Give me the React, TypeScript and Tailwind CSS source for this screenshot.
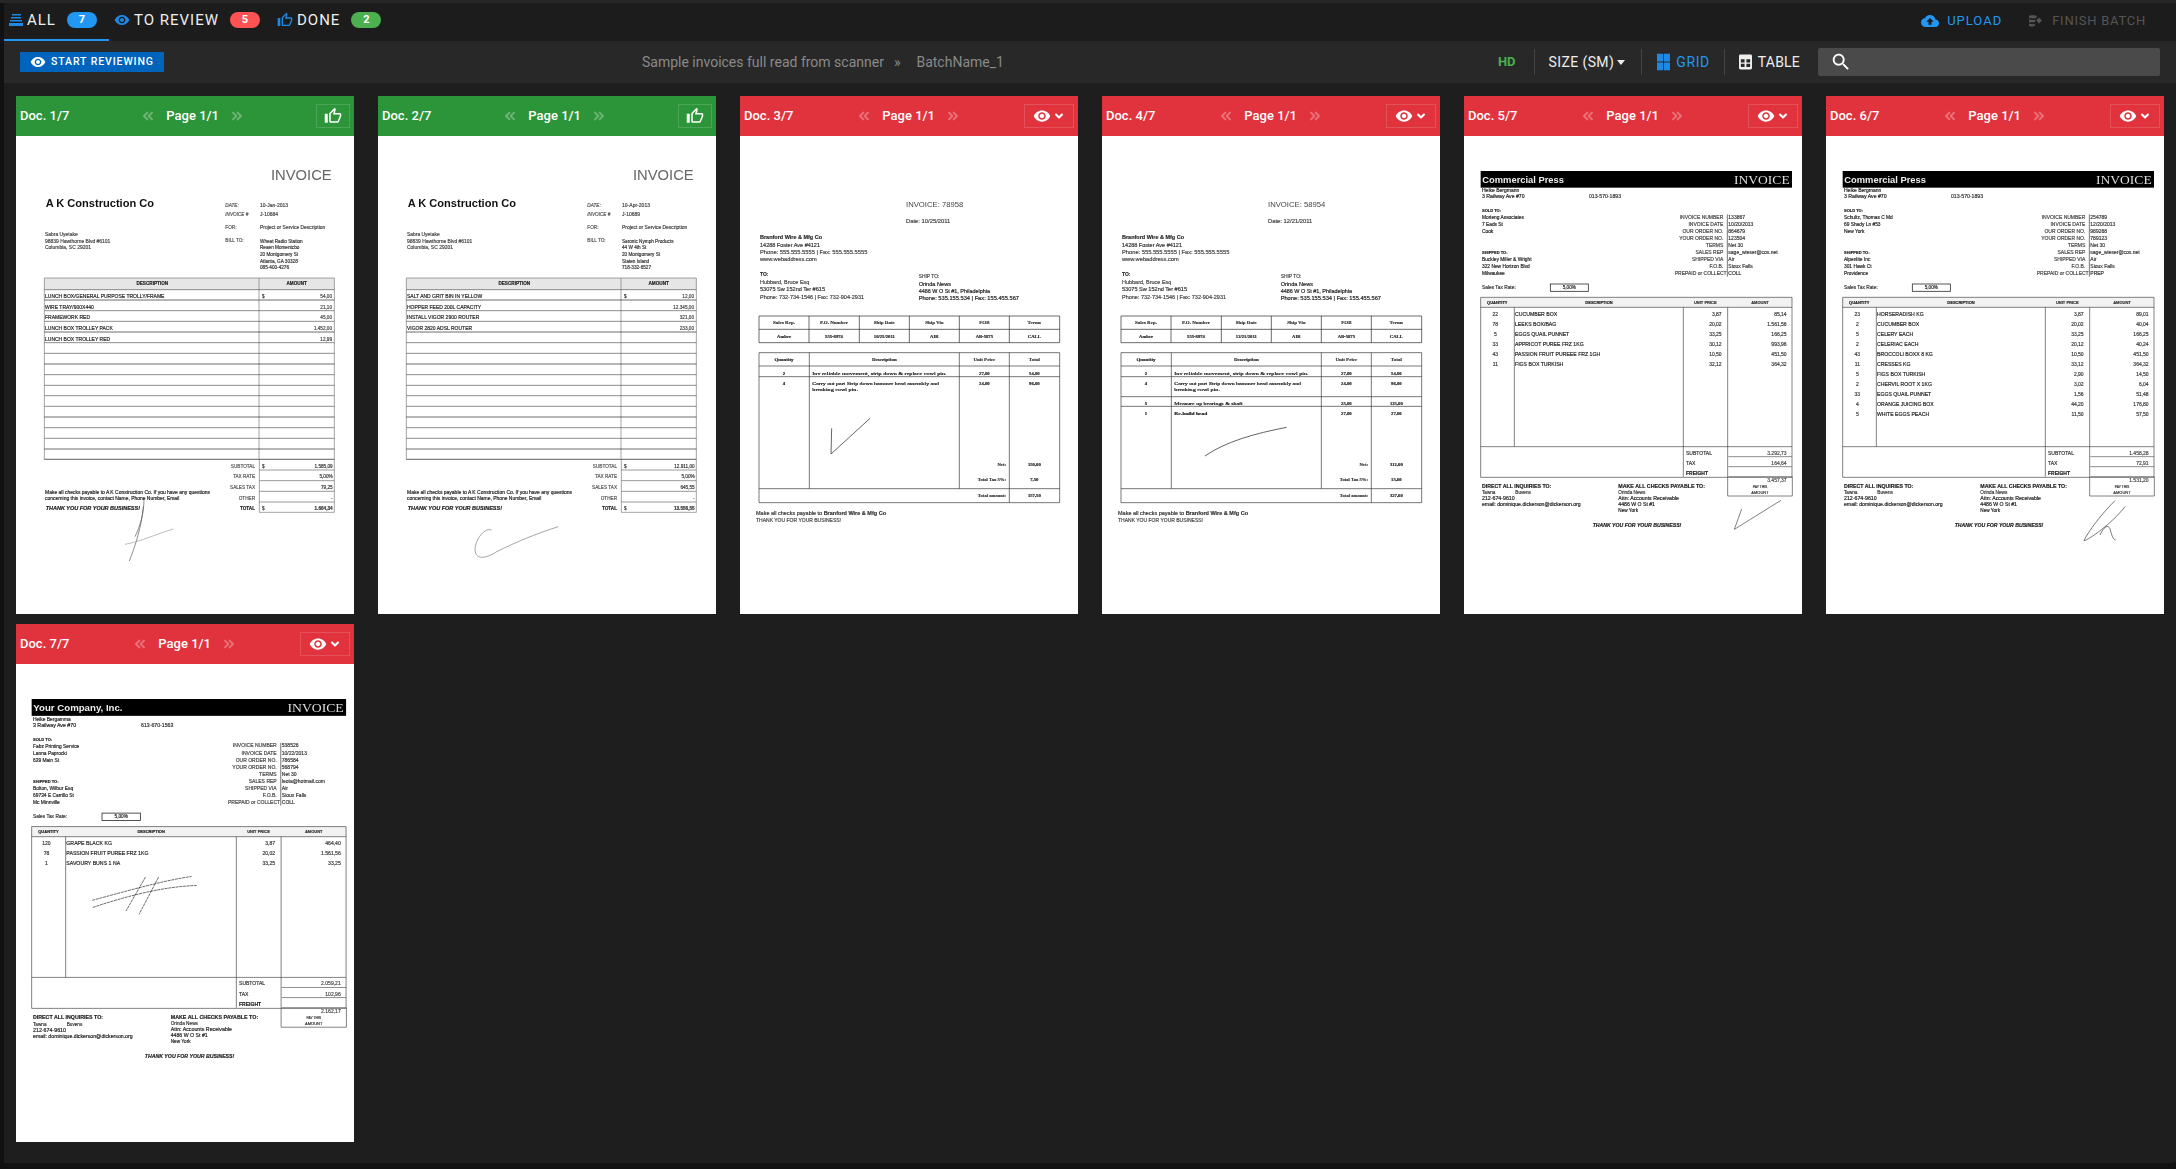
import React from 'react'
import { ChevronDown, ChevronsLeft, ChevronsRight } from 'lucide-react'

const EYE =
  'M12 4.5C7 4.5 2.73 7.61 1 12c1.73 4.39 6 7.5 11 7.5s9.27-3.11 11-7.5c-1.73-4.39-6-7.5-11-7.5zM12 17c-2.76 0-5-2.24-5-5s2.24-5 5-5 5 2.24 5 5-2.24 5-5 5zm0-8c-1.66 0-3 1.34-3 3s1.34 3 3 3 3-1.34 3-3-1.34-3-3-3z'
const THUMB =
  'M9 21h9c.83 0 1.54-.5 1.84-1.22l3.02-7.05c.09-.23.14-.47.14-.73v-2c0-1.1-.9-2-2-2h-6.31l.95-4.57.03-.32c0-.41-.17-.79-.44-1.06L14.17 1 7.58 7.59C7.22 7.95 7 8.45 7 9v10c0 1.1.9 2 2 2zM9 9l4.34-4.34L12 10h9v2l-3 7H9V9zM1 9h4v12H1z'
const CLOUD =
  'M19.35 10.04C18.67 6.59 15.64 4 12 4 9.11 4 6.6 5.64 5.35 8.04 2.34 8.36 0 10.91 0 14c0 3.31 2.69 6 6 6h13c2.76 0 5-2.24 5-5 0-2.64-2.05-4.78-4.65-4.96zM14 13v4h-4v-4H7l5-5 5 5h-3z'
const SEARCH =
  'M15.5 14h-.79l-.28-.27C15.41 12.59 16 11.11 16 9.5 16 5.91 13.09 3 9.5 3S3 5.91 3 9.5 5.91 16 9.5 16c1.61 0 3.09-.59 4.23-1.57l.27.28v.79l5 4.99L20.49 19l-4.99-5zm-6 0C7.01 14 5 11.99 5 9.5S7.01 5 9.5 5 14 7.01 14 9.5 11.99 14 9.5 14z'

const Icon = ({ d, className }: { d: string; className: string }) => (
  <svg viewBox="0 0 24 24" fill="currentColor" className={className}>
    <path d={d} />
  </svg>
)

// ---- scanned page helpers (coordinates are page units, 3 per screen pixel) ----

type TextProps = {
  x: number
  y: number
  s?: number
  w?: number
  b?: boolean
  i?: boolean
  a?: 'start' | 'middle' | 'end'
  serif?: boolean
  c?: string
  children: React.ReactNode
}

// small scan text gets a thin stroke so it stays as heavy as the photocopy
const T = ({ x, y, s = 14, w, b, i, a = 'start', serif, c = '#2a2a2a', children }: TextProps) => (
  <text
    x={x}
    y={y}
    fontSize={s}
    textAnchor={a}
    fill={c}
    stroke={s < 20 ? c : undefined}
    strokeWidth={s < 20 ? 0.5 : undefined}
    textLength={w}
    lengthAdjust={w ? 'spacingAndGlyphs' : undefined}
    className={`${b ? 'font-bold' : ''} ${i ? 'italic' : ''} ${serif ? "font-['Liberation_Serif']" : ''}`}
  >
    {children}
  </text>
)

const L = ({ d, c = '#333', w = 2 }: { d: string; c?: string; w?: number }) => (
  <path d={d} stroke={c} strokeWidth={w} fill="none" />
)

const Page = ({ box, children }: { box: string; children: React.ReactNode }) => (
  <svg
    viewBox={box}
    preserveAspectRatio="none"
    className="h-[478px] w-[338px] bg-white font-['Liberation_Sans'] blur-[0.3px]"
  >
    {children}
  </svg>
)

// ---- A K Construction layout ----

type AkProps = {
  date: string
  no: string
  bill: string[]
  rows: [string, string][]
  totals: string[]
  sign: React.ReactNode
}

const AkInvoice = ({ date, no, bill, rows, totals, sign }: AkProps) => {
  const lines = [479, 510, 542, 574, 606, 638, 670, 702, 734, 766, 797, 829, 861, 893, 925, 957, 988]
  const sums = ['SUBTOTAL', 'TAX RATE', 'SALES TAX', 'OTHER', 'TOTAL']
  return (
    <Page box="48 18 1014 1434">
      <T x={813} y={151} s={46} w={182} c="#666">INVOICE</T>
      <T x={137} y={231} s={33} w={325} b c="#111">A K Construction Co</T>
      <T x={676} y={230} s={14} c="#555" i>DATE:</T>
      <T x={676} y={257} s={14} c="#555" i>INVOICE #</T>
      <T x={676} y={297} s={14} c="#555">FOR:</T>
      <T x={676} y={337} s={14} c="#555">BILL TO:</T>
      <T x={780} y={230} s={14} c="#444" w={84}>{date}</T>
      <T x={780} y={257} s={14} c="#444" w={54}>{no}</T>
      <T x={780} y={298} s={14} c="#444" w={196}>Project or Service Description</T>
      {bill.map((b, i) => (
        <T key={i} x={780} y={338 + i * 20} s={14} c="#333">{b}</T>
      ))}
      <T x={135} y={318} s={14} c="#444" w={98}>Sabra Uyetake</T>
      <T x={135} y={338} s={14} c="#444" w={196}>98839 Hawthorne Blvd #6101</T>
      <T x={135} y={358} s={14} c="#444" w={138}>Columbia, SC 29201</T>

      <rect x={133} y={444} width={870} height={35} fill="#e6e6e6" />
      <L d="M133 444H1003V988H133ZM777 444V988M778 988V1147H1003V988" c="#777" />
      {lines.map((y) => (
        <L key={y} d={`M133 ${y}H1003`} c={y % 3 === 0 ? '#222' : '#555'} />
      ))}
      {[1020, 1052, 1084, 1116].map((y) => (
        <L key={y} d={`M778 ${y}H1003`} c="#666" />
      ))}
      <T x={457} y={465} s={14} a="middle" b c="#222">DESCRIPTION</T>
      <T x={890} y={465} s={14} a="middle" b c="#222">AMOUNT</T>
      {rows.map(([name, amount], i) => (
        <React.Fragment key={name}>
          <T x={135} y={504 + i * 32} s={15} c="#222">{name}</T>
          <T x={996} y={504 + i * 32} s={14} a="end" c="#444">{amount}</T>
        </React.Fragment>
      ))}
      <T x={786} y={504} s={14} c="#333">$</T>
      {sums.map((label, i) => (
        <React.Fragment key={label}>
          <T x={765} y={1013 + i * 32} s={14} a="end" b={i === 4} c={i === 4 ? '#222' : '#555'}>{label}</T>
          <T x={998} y={1013 + i * 32} s={14} a="end" b={i === 4} c="#333">{totals[i]}</T>
        </React.Fragment>
      ))}
      <T x={786} y={1013} s={14} c="#333">$</T>
      <T x={786} y={1141} s={14} c="#333">$</T>
      <T x={135} y={1091} s={14} w={495} c="#222">Make all checks payable to A K Construction Co. If you have any questions</T>
      <T x={135} y={1110} s={14} w={403} c="#222">concerning this invoice, contact Name, Phone Number, Email</T>
      <T x={137} y={1141} s={14} w={283} b i c="#222">THANK YOU FOR YOUR BUSINESS!</T>
      {sign}
    </Page>
  )
}

// ---- Branford Wire layout ----

type BranfordRow = { y: number; q: string; d: string; price: string; total: string; b?: boolean }

type BranfordProps = {
  no: string
  date: string
  shipDate: string
  rows: BranfordRow[]
  rules: string
  net: string
  tax: string
  sum: string
  sign: string
}

const BranfordInvoice = ({ no, date, shipDate, rows, rules, net, tax, sum, sign }: BranfordProps) => {
  const cols = [162, 312, 463, 613, 763, 913]
  const head = ['Sales Rep.', 'P.O. Number', 'Ship Date', 'Ship Via', 'FOB', 'Terms']
  const vals = ['Amber', '555-8974', shipDate, 'AIR', 'AB-5875', 'CALL']
  return (
    <Page box="30 138 1014 1434">
      <T x={528} y={352} s={23} w={172} c="#444">INVOICE: {no}</T>
      <T x={528} y={399} s={15} w={133} c="#444">Date: {date}</T>
      <T x={90} y={448} s={15} w={186} b>Branford Wire &amp; Mfg Co</T>
      <T x={90} y={470} s={15} w={180} c="#333">14288 Foster Ave #4121</T>
      <T x={90} y={492} s={15} w={322} c="#444">Phone: 555.555.5555 | Fax: 555.555.5555</T>
      <T x={90} y={514} s={15} w={170} c="#444">www.webaddress.com</T>
      <T x={90} y={559} s={15} b>TO:</T>
      <T x={90} y={581} s={15} w={148} c="#444">Hubbard, Bruce Esq</T>
      <T x={90} y={603} s={15} w={195} c="#333">53075 Sw 152nd Ter #615</T>
      <T x={90} y={626} s={15} w={312} c="#444">Phone: 732-734-1546 | Fax: 732-904-2931</T>
      <T x={566} y={565} s={15} w={62} c="#444">SHIP TO:</T>
      <T x={566} y={587} s={15} w={97} c="#222">Orinda News</T>
      <T x={566} y={609} s={15} w={214} c="#222">4486 W O St #1, Philadelphia</T>
      <T x={566} y={631} s={15} w={301} c="#222">Phone: 535.155.534 | Fax: 155.455.567</T>

      <L d="M87 678H989V758H87ZM87 718H989M237 678V758M388 678V758M538 678V758M688 678V758M838 678V758" c="#222" />
      {cols.map((x, i) => (
        <React.Fragment key={x}>
          <T x={x} y={703} s={15} a="middle" serif b c="#333">{head[i]}</T>
          <T x={x} y={743} s={14} a="middle" serif b c="#222">{vals[i]}</T>
        </React.Fragment>
      ))}

      <L d={`M87 788V1238H989V788M87 788H989M87 828H989M238 788V1196M688 788V1196M838 788V1238M87 1196H989${rules}`} c="#333" />
      <T x={162} y={814} s={15} a="middle" serif b c="#222">Quantity</T>
      <T x={463} y={814} s={15} a="middle" serif b c="#222">Description</T>
      <T x={763} y={813} s={15} a="middle" serif b c="#333">Unit Price</T>
      <T x={913} y={813} s={15} a="middle" serif b c="#333">Total</T>
      {rows.map((r) => (
        <React.Fragment key={r.d}>
          {r.q && <T x={162} y={r.y} s={14} a="middle" serif b c="#111">{r.q}</T>}
          <T x={247} y={r.y} s={15} serif b={r.b} w={r.d.length * 7.6} c="#111">{r.d}</T>
          {r.price && <T x={763} y={r.y} s={14} a="middle" serif b c="#222">{r.price}</T>}
          {r.total && <T x={913} y={r.y} s={14} a="middle" serif b c="#222">{r.total}</T>}
        </React.Fragment>
      ))}
      <T x={828} y={1129} s={14} a="end" serif b c="#333">Net:</T>
      <T x={913} y={1129} s={14} a="middle" serif b c="#222">{net}</T>
      <T x={828} y={1174} s={14} a="end" serif b c="#333">Total Tax 5%:</T>
      <T x={913} y={1174} s={14} a="middle" serif b c="#222">{tax}</T>
      <T x={828} y={1222} s={14} a="end" serif b c="#333">Total amount:</T>
      <T x={913} y={1222} s={14} a="middle" serif b c="#222">{sum}</T>
      <T x={78} y={1275} s={15} w={390} c="#333">
        Make all checks payable to <tspan className="font-bold">Branford Wire &amp; Mfg Co</tspan>
      </T>
      <T x={78} y={1297} s={15} w={255} c="#444">THANK YOU FOR YOUR BUSINESS!</T>
      <path d={sign} stroke="#444" strokeWidth={2.5} fill="none" />
    </Page>
  )
}

// ---- Commercial Press layout ----

type PressProps = {
  box: string
  title: string
  titleW: number
  contact: string
  phone: string
  sold: string[]
  shipped: string[]
  values: string[]
  rows: string[][]
  sub: string
  tax: string
  total: string
  sign: React.ReactNode
}

const PRESS_LABELS = [
  'INVOICE NUMBER',
  'INVOICE DATE',
  'OUR ORDER NO.',
  'YOUR ORDER NO.',
  'TERMS',
  'SALES REP',
  'SHIPPED VIA',
  'F.O.B.',
  'PREPAID or COLLECT',
]

const PressInvoice = ({ box, title, titleW, contact, phone, sold, shipped, values, rows, sub, tax, total, sign }: PressProps) => (
  <Page box={box}>
    <rect x={92} y={243} width={934} height={50} fill="#000" />
    <T x={97} y={278} s={25} w={titleW} b c="#eee">{title}</T>
    <T x={852} y={282} s={38} w={167} serif c="#ddd">INVOICE</T>
    <T x={96} y={307} s={14} w={112} c="#222">{contact}</T>
    <T x={96} y={325} s={14} w={128} c="#222">3 Railway Ave #70</T>
    <T x={417} y={325} s={14} w={96} c="#333">{phone}</T>
    <T x={96} y={367} s={12} b c="#222">SOLD TO:</T>
    {sold.map((v, i) => (
      <T key={i} x={96} y={388 + i * 21} s={14.5} c="#222">{v}</T>
    ))}
    <T x={96} y={493} s={12} b c="#222">SHIPPED TO:</T>
    {shipped.map((v, i) => (
      <T key={i} x={96} y={514 + i * 21} s={14.5} c="#222">{v}</T>
    ))}
    {PRESS_LABELS.map((label, i) => (
      <React.Fragment key={label}>
        <T x={i === 8 ? 830 : 820} y={387 + i * 21} s={15} a="end" c="#444">{label}</T>
        <T x={835} y={387 + i * 21} s={15} c="#333">{values[i]}</T>
      </React.Fragment>
    ))}
    <L d="M832 373V560" c="#333" />
    <T x={96} y={598} s={14.5} c="#333">Sales Tax Rate:</T>
    <rect x={301} y={582} width={114} height={22} fill="#fff" stroke="#333" strokeWidth={2.5} />
    <T x={358} y={598} s={14} a="middle" c="#222">5,00%</T>

    <rect x={92} y={622} width={934} height={30} fill="#f2f2f2" />
    <L d="M92 622H1026V1162H92ZM92 652H1026M193 652V1070M700 652V1160M833 652V1218H1027V1160M92 1070H1026" c="#444" />
    <L d="M835 1100H1026M835 1130H1026M835 1160H1026" c="#555" />
    <T x={142} y={641} s={12} a="middle" b c="#222">QUANTITY</T>
    <T x={447} y={641} s={12} a="middle" b c="#222">DESCRIPTION</T>
    <T x={766} y={641} s={12} a="middle" b c="#333">UNIT PRICE</T>
    <T x={930} y={641} s={12} a="middle" b c="#333">AMOUNT</T>
    {rows.map(([q, d, p, t], i) => (
      <React.Fragment key={d}>
        <T x={136} y={677 + i * 30} s={15} a="middle" c="#333">{q}</T>
        <T x={195} y={677 + i * 30} s={15.5} c="#222">{d}</T>
        <T x={815} y={677 + i * 30} s={15} a="end" c="#333">{p}</T>
        <T x={1010} y={677 + i * 30} s={15} a="end" c="#333">{t}</T>
      </React.Fragment>
    ))}
    <T x={708} y={1094} s={15} c="#333">SUBTOTAL</T>
    <T x={708} y={1124} s={15} c="#333">TAX</T>
    <T x={708} y={1154} s={15} b c="#222">FREIGHT</T>
    <T x={1010} y={1094} s={15} a="end" c="#444">{sub}</T>
    <T x={1010} y={1124} s={15} a="end" c="#444">{tax}</T>
    <T x={1010} y={1175} s={15} a="end" c="#444">{total}</T>
    <T x={930} y={1193} s={10} a="middle" c="#333">PAY THIS</T>
    <T x={930} y={1212} s={12} a="middle" c="#333">AMOUNT</T>
    <T x={96} y={1195} s={15} w={208} b c="#222">DIRECT ALL INQUIRIES TO:</T>
    <T x={96} y={1213} s={14} c="#333">Tawna</T>
    <T x={196} y={1213} s={14} c="#333">Buvens</T>
    <T x={96} y={1231} s={14} w={98} c="#222">212-674-9610</T>
    <T x={96} y={1249} s={14} w={296} c="#222">email: dominique.dickerson@dickerson.org</T>
    <T x={505} y={1193} s={15} w={260} b c="#222">MAKE ALL CHECKS PAYABLE TO:</T>
    <T x={505} y={1212} s={14} c="#333">Orinda News</T>
    <T x={505} y={1230} s={14} w={182} c="#222">Attn: Accounts Receivable</T>
    <T x={505} y={1248} s={14} w={110} c="#222">4486 W O St #1</T>
    <T x={505} y={1266} s={14} c="#222">New York</T>
    <T x={428} y={1310} s={14} w={266} b i c="#222">THANK YOU FOR YOUR BUSINESS!</T>
    {sign}
  </Page>
)

// ---- card chrome ----

const DocCard = ({ label, done, children }: { label: string; done?: boolean; children: React.ReactNode }) => (
  <div className="w-[338px]">
    <div
      className={`flex h-10 items-center justify-between pl-1 pr-1 text-[13px] font-medium text-white ${
        done ? 'bg-[#2d9539]' : 'bg-[#e1333d]'
      }`}
    >
      <span>{label}</span>
      <div className="flex w-[105px] items-center justify-between">
        <ChevronsLeft className="h-4 w-4 text-white/30" strokeWidth={3} />
        <span>Page 1/1</span>
        <ChevronsRight className="h-4 w-4 text-white/30" strokeWidth={3} />
      </div>
      {done ? (
        <div className="flex h-6 w-[34px] items-center justify-center border border-white/15">
          <Icon d={THUMB} className="h-[18px] w-[18px]" />
        </div>
      ) : (
        <div className="flex h-6 w-[50px] items-center justify-center gap-0.5 border border-white/15">
          <Icon d={EYE} className="h-[18px] w-[18px]" />
          <ChevronDown className="h-3 w-3" strokeWidth={4} />
        </div>
      )}
    </div>
    {children}
  </div>
)

const Tab = ({
  icon,
  label,
  count,
  badge,
  active,
}: {
  icon: React.ReactNode
  label: string
  count: number
  badge: string
  active?: boolean
}) => (
  <div className={`flex h-[38px] items-center pb-[2px] pl-[5px] pr-[12px] border-b-2 ${active ? 'border-[#2196f3]' : 'border-transparent'}`}>
    {icon}
    <span className="ml-[4px] text-[15px] tracking-[1px] text-[#eeeeee]">{label}</span>
    <span className={`ml-[11px] flex h-4 w-[30px] items-center justify-center rounded-full text-[11px] font-bold text-white ${badge}`}>
      {count}
    </span>
  </div>
)

const Sep = ({ className = 'mx-[14px]' }: { className?: string }) => <div className={`h-[26px] w-px bg-[#444] ${className}`} />

const sign1 = (
  <g fill="none" stroke="#555" strokeWidth={2}>
    <path d="M432 1105C432 1150 420 1190 405 1220" />
    <path d="M430 1130C425 1190 405 1250 388 1293" />
    <path d="M375 1243C420 1235 470 1212 520 1197" stroke="#999" />
  </g>
)

const sign2 = (
  <path
    d="M389 1200C364 1190 334 1240 340 1265C344 1290 374 1285 404 1265C454 1240 524 1210 589 1190"
    fill="none"
    stroke="#777"
    strokeWidth={2}
  />
)

const sign6 = (
  <g fill="none" stroke="#333" strokeWidth={2}>
    <path d="M909 1232C850 1290 815 1350 816 1352C830 1350 900 1300 939 1250" />
    <path d="M864 1335C875 1310 890 1300 895 1320C900 1340 905 1350 911 1350" />
  </g>
)

const sign7 = (
  <g fill="none" stroke="#222" strokeWidth={2} strokeDasharray="9 2">
    <path d="M272 841C370 815 470 785 567 770" />
    <path d="M274 862C370 830 480 800 582 797" />
    <path d="M430 772L372 873" />
    <path d="M469 772L411 883" />
  </g>
)

export default function App() {
  return (
    <div className="min-h-[1169px] bg-[#111111] font-['Roboto',sans-serif]">
      <div className="h-[3px] bg-[#262626]" />
      <div className="ml-1 h-[1160px] rounded-br-[3px] bg-[#1e1e1e]">
        {/* tabs */}
        <div className="flex h-[38px] items-start bg-[#1c1c1c]">
          <Tab
            active
            label="ALL"
            count={7}
            badge="bg-[#2196f3]"
            icon={
              <svg viewBox="0 0 14 12" className="h-3 w-[14px] text-[#1e88e5]" fill="currentColor">
                <path d="M3 0h9v1.6H3zM2 3h10v1.6H2zM1 6h12v1.6H1zM0 9h14v3H0z" />
              </svg>
            }
          />
          <Tab label="TO REVIEW" count={5} badge="bg-[#ff5252]" icon={<Icon d={EYE} className="h-4 w-4 text-[#1e88e5]" />} />
          <Tab label="DONE" count={2} badge="bg-[#4caf50]" icon={<Icon d={THUMB} className="h-4 w-4 text-[#1e88e5]" />} />
          <div className="ml-auto flex h-[36px] items-center pr-[30px] text-[13px] tracking-[1px]">
            <Icon d={CLOUD} className="h-[18px] w-[18px] text-[#2196f3]" />
            <span className="ml-2 text-[#2196f3]">UPLOAD</span>
            <svg viewBox="0 0 14 14" className="ml-[26px] h-[14px] w-[14px] text-[#555]" fill="currentColor">
              <path d="M1 2.2C1 1 8.5 1 8.5 2.2v1.3C8.5 4.7 1 4.7 1 3.5zM1 5.2c2 1 5.5 1 7.5 0v1.1H7v2H1zM1 9.5c1.5.8 4 .9 6 .5v1.8C5 12.9 1 12.8 1 11.5zM9 5h1.5V3l3.5 3.5-3.5 3.5V8H9z" />
            </svg>
            <span className="ml-[10px] tracking-[0.75px] text-[#555]">FINISH BATCH</span>
          </div>
        </div>

        {/* toolbar */}
        <div className="flex h-[42px] items-center justify-between bg-[#282828] pl-4 pr-4">
          <button className="flex h-5 w-[144px] items-center bg-[#0064bd] pl-[10px] text-[10.5px] font-medium tracking-[0.9px] text-white">
            <Icon d={EYE} className="h-4 w-4" />
            <span className="ml-[5px]">START REVIEWING</span>
          </button>
          <div className="mr-[16px] flex items-center text-[14px] text-[#8a8a8a]">
            <span>Sample invoices full read from scanner</span>
            <span className="ml-[10px] mr-[16px]">»</span>
            <span>BatchName_1</span>
          </div>
          <div className="flex items-center text-[14px] tracking-[0.6px]">
            <span className="text-[13px] font-bold tracking-normal text-[#4caf50]">HD</span>
            <Sep className="ml-[18px] mr-[14px]" />
            <span className="tracking-[0.4px] text-[#eeeeee]">SIZE (SM)</span>
            <svg viewBox="0 0 8 5" className="ml-[3px] h-[5px] w-2 text-[#eeeeee]" fill="currentColor">
              <path d="M0 0h8L4 5z" />
            </svg>
            <Sep className="ml-[16px] mr-[15px]" />
            <svg viewBox="0 0 14 18" className="h-[18px] w-[13px] text-[#1e88e5]" fill="currentColor">
              <path d="M0 0h6.5v8.5H0zM7.5 0H14v8.5H7.5zM0 9.5h6.5V18H0zM7.5 9.5H14V18H7.5z" />
            </svg>
            <span className="ml-[6px] text-[#2196f3]">GRID</span>
            <Sep />
            <svg viewBox="0 0 14 16" className="h-4 w-[13px] text-[#eeeeee]" fill="currentColor">
              <path
                fillRule="evenodd"
                d="M1.5 0h11A1.5 1.5 0 0 1 14 1.5v13a1.5 1.5 0 0 1-1.5 1.5h-11A1.5 1.5 0 0 1 0 14.5v-13A1.5 1.5 0 0 1 1.5 0zM2 5v3.5h4V5zm6 0v3.5h4V5zM2 10v3.5h4V10zm6 0v3.5h4V10z"
              />
            </svg>
            <span className="ml-[6px] tracking-[0.2px] text-[#eeeeee]">TABLE</span>
            <div className="ml-[18px] flex h-7 w-[342px] items-center rounded-[2px] bg-[#4a4a4a] pl-[12px]">
              <Icon d={SEARCH} className="h-[22px] w-[22px] text-white" />
            </div>
          </div>
        </div>

        {/* documents */}
        <div className="grid grid-cols-[repeat(6,338px)] gap-x-6 gap-y-[10px] pl-3 pt-[13px]">
          <DocCard label="Doc. 1/7" done>
            <AkInvoice
              date="10-Jan-2013"
              no="J-10684"
              bill={['Wheat Radio Station', 'Reaen Momentcbo', '20 Montgomery St', 'Atlanta, GA 30328', '085-400-4276']}
              rows={[
                ['LUNCH BOX/GENERAL PURPOSE TROLLY/FRAME', '54,00'],
                ['WIRE TRAY/900X440', '21,10'],
                ['FRAMEWORK RED', '45,00'],
                ['LUNCH BOX TROLLEY PACK', '1.452,00'],
                ['LUNCH BOX TROLLEY RED', '12,99'],
              ]}
              totals={['1.585,09', '5,00%', '79,25', '-', '1.664,34']}
              sign={sign1}
            />
          </DocCard>
          <DocCard label="Doc. 2/7" done>
            <AkInvoice
              date="10-Apr-2013"
              no="J-10689"
              bill={['Saronic Nymph Products', '44 W 4th St', '20 Montgomery St', 'Staten Island', '718-332-6527']}
              rows={[
                ['SALT AND GRIT BIN IN YELLOW', '12,00'],
                ['HOPPER FEED 200L CAPACITY', '12.345,00'],
                ['INSTALL VIGOR 2900 ROUTER', '321,00'],
                ['VIGOR 2820 ADSL ROUTER', '233,00'],
              ]}
              totals={['12.911,00', '5,00%', '645,55', '-', '13.556,55']}
              sign={sign2}
            />
          </DocCard>
          <DocCard label="Doc. 3/7">
            <BranfordInvoice
              no="78958"
              date="10/25/2011"
              shipDate="10/25/2011"
              rules="M87 860H989"
              rows={[
                { y: 855, q: '2', d: 'Inv reliable movement, strip down & replace cowl pin.', price: '27,00', total: '54,00' },
                { y: 885, q: '4', d: 'Carry out part Strip down hammer head assembly and', price: '24,00', total: '96,00' },
                { y: 903, q: '', d: 'breaking cowl pin.', price: '', total: '' },
              ]}
              net="150,00"
              tax="7,50"
              sum="157,50"
              sign="M305 1015L303 1092L420 985"
            />
          </DocCard>
          <DocCard label="Doc. 4/7">
            <BranfordInvoice
              no="58954"
              date="12/21/2011"
              shipDate="12/21/2011"
              rules="M87 860H989M87 920H989M87 949H989"
              rows={[
                { y: 855, q: '2', d: 'Inv reliable movement, strip down & replace cowl pin.', price: '27,00', total: '54,00' },
                { y: 885, q: '4', d: 'Carry out part Strip down hammer head assembly and', price: '24,00', total: '96,00' },
                { y: 903, q: '', d: 'breaking cowl pin.', price: '', total: '' },
                { y: 944, q: '5', d: 'Measure up bearings & shaft', price: '25,00', total: '125,00' },
                { y: 974, q: '1', d: 'Re-build head', price: '27,00', total: '27,00', b: true },
              ]}
              net="312,00"
              tax="15,60"
              sum="327,60"
              sign="M339 1098C400 1055 490 1030 584 1012"
            />
          </DocCard>
          <DocCard label="Doc. 5/7">
            <PressInvoice
              box="42 138 1014 1434"
              title="Commercial Press"
              titleW={245}
              contact="Heike Bergmann"
              phone="013-570-1893"
              sold={['Morieng Associates', '7 Eads St', 'Cook']}
              shipped={['Buckley Miller & Wright', '322 New Horizon Blvd', 'Milwaukee']}
              values={['133867', '10/20/2013', '864679', '123504', 'Net 30', 'sage_wieser@cox.net', 'Air', 'Sioux Falls', 'COLL']}
              rows={[
                ['22', 'CUCUMBER BOX', '3,87', '85,14'],
                ['78', 'LEEKS BOX/BAG', '20,02', '1.561,56'],
                ['5', 'EGGS QUAIL PUNNET', '33,25', '166,25'],
                ['33', 'APPRICOT PUREE FRZ 1KG', '30,12', '993,96'],
                ['43', 'PASSION FRUIT PUREEE FRZ 1GH', '10,50', '451,50'],
                ['11', 'FIGS BOX TURKISH', '32,12', '364,32'],
              ]}
              sub="3.292,73"
              tax="164,64"
              total="3.457,37"
              sign={<path d="M875 1257L853 1318L993 1231" fill="none" stroke="#444" strokeWidth={2} />}
            />
          </DocCard>
          <DocCard label="Doc. 6/7">
            <PressInvoice
              box="42 138 1014 1434"
              title="Commercial Press"
              titleW={245}
              contact="Heike Bergmann"
              phone="013-570-1893"
              sold={['Schultz, Thomas C Md', '69 Shady Ln #53', 'New York']}
              shipped={['Alpenlite Inc', '301 Hawk Ct', 'Providence']}
              values={['254789', '12/20/2013', '989268', '789123', 'Net 30', 'sage_wieser@cox.net', 'Air', 'Sioux Falls', 'PREP']}
              rows={[
                ['23', 'HORSERADISH KG', '3,87', '89,01'],
                ['2', 'CUCUMBER BOX', '20,02', '40,04'],
                ['5', 'CELERY EACH', '33,25', '166,25'],
                ['2', 'CELERIAC EACH', '20,12', '40,24'],
                ['43', 'BROCCOLI BOXX 8 KG', '10,50', '451,50'],
                ['11', 'CRESSES KG', '33,12', '364,32'],
                ['5', 'FIGS BOX TURKISH', '2,90', '14,50'],
                ['2', 'CHERVIL ROOT X 1KG', '3,02', '6,04'],
                ['33', 'EGGS QUAIL PUNNET', '1,56', '51,48'],
                ['4', 'ORANGE JUICING BOX', '44,20', '176,80'],
                ['5', 'WHITE EGGS PEACH', '11,50', '57,50'],
              ]}
              sub="1.458,28"
              tax="72,91"
              total="1.531,20"
              sign={sign6}
            />
          </DocCard>
          <DocCard label="Doc. 7/7">
            <PressInvoice
              box="45.5 139 1004 1420"
              title="Your Company, Inc."
              titleW={265}
              contact="Heike Bergamma"
              phone="613-670-1563"
              sold={['Fabz Printing Service', 'Lanna Paprocki', '639 Main St']}
              shipped={['Bolton, Wilbur Esq', '69734 E Carrillo St', 'Mc Minnville']}
              values={['538526', '10/22/2013', '786584', '568794', 'Net 30', 'leota@hotmail.com', 'Air', 'Sioux Falls', 'COLL']}
              rows={[
                ['120', 'GRAPE BLACK KG', '3,87', '464,40'],
                ['78', 'PASSION FRUIT PUREE FRZ 1KG', '20,02', '1.561,56'],
                ['1', 'SAVOURY BUNS 1 NA', '33,25', '33,25'],
              ]}
              sub="2.059,21"
              tax="102,96"
              total="2.162,17"
              sign={sign7}
            />
          </DocCard>
        </div>
      </div>
    </div>
  )
}
